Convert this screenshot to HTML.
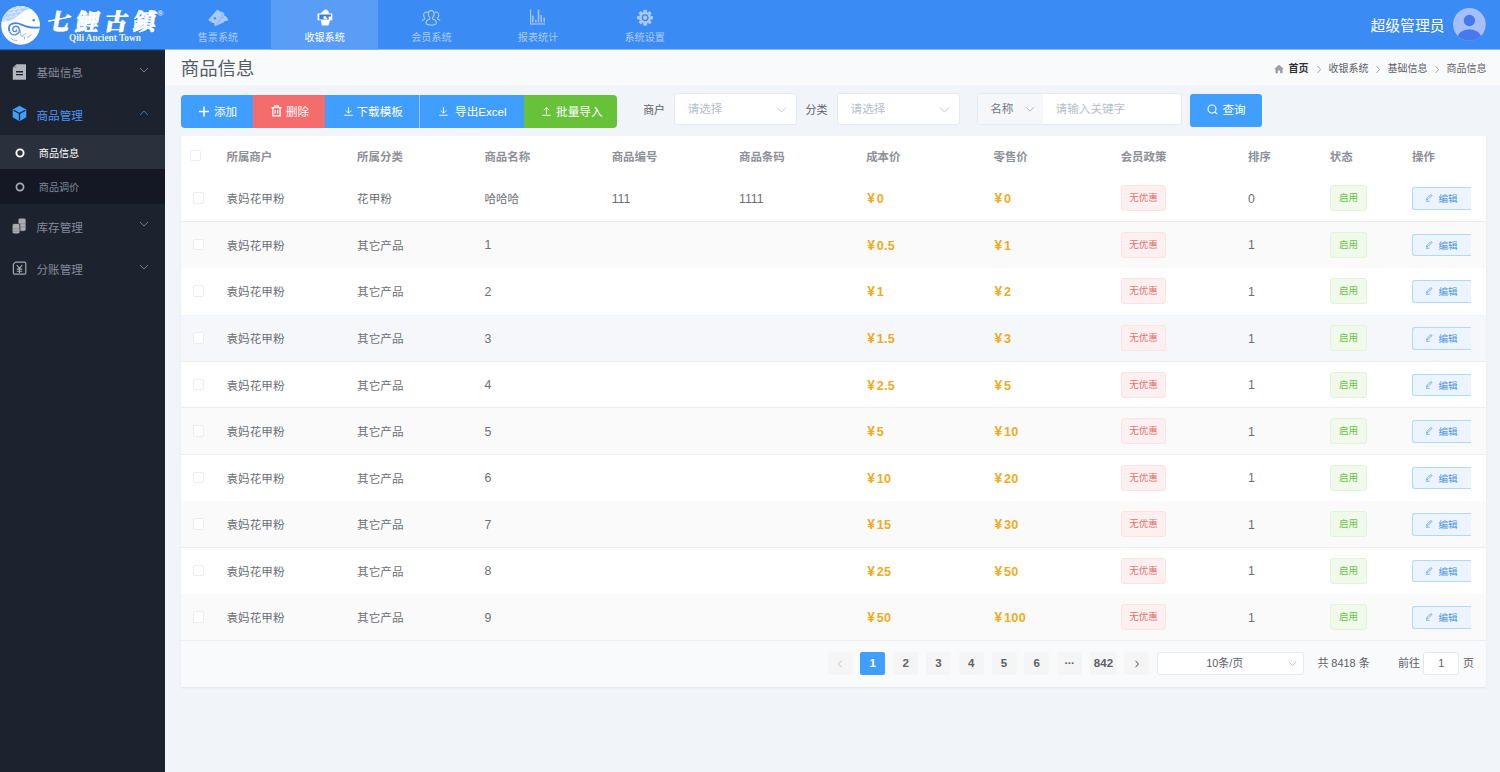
<!DOCTYPE html>
<html lang="zh-CN">
<head>
<meta charset="utf-8">
<title>商品信息 - 七鲤古镇</title>
<style>
*{box-sizing:border-box;margin:0;padding:0}
html,body{width:1500px;height:772px;overflow:hidden}
body{background:#f1f4f8;font-family:"Liberation Sans","Noto Sans CJK SC",sans-serif;font-size:10.94px;color:#606266;position:relative}
ul{list-style:none}
svg{display:block}
/* ---------- header ---------- */
.hd{position:absolute;left:0;top:0;width:1500px;height:49px;background:#3a8bf4;color:#fff;z-index:2;box-shadow:0 1px 0 rgba(58,139,244,.55)}
.logo{position:absolute;left:0;top:0;width:165px;height:50px}
.logo svg{position:absolute;left:0;top:0}
.logo .cn{position:absolute;left:45px;top:8.6px;width:118px;height:28px;line-height:28px;font-family:"Liberation Serif","Noto Serif CJK SC",serif;font-weight:900;font-size:23px;letter-spacing:5.6px;white-space:nowrap;transform:skewX(-10deg);transform-origin:0 100%;color:#fff;-webkit-text-stroke:.7px #fff}
.logo .en{position:absolute;left:69px;top:32.7px;width:74px;line-height:11px;font-family:"Liberation Serif",serif;font-weight:700;font-size:9.3px;white-space:nowrap;color:#eaf2fe}
.logo .r{position:absolute;left:157.6px;top:9.6px;font-size:8px;line-height:8px;font-weight:700;color:#e4effe}
.nav{position:absolute;left:164.6px;top:0;height:49px;display:flex}
.nav li{width:106.7px;height:49px;text-align:center;color:#abccfa;font-size:10.1px;position:relative}
.nav li.on{background:#5a9df6;color:#fff;box-shadow:0 1px 0 rgba(90,157,246,.55)}
.nav li svg{position:absolute;left:50%;top:6.5px;margin-left:-11px;width:22px;height:22px}
.nav li span{position:absolute;left:0;right:0;top:31.2px;line-height:14px}
.user{position:absolute;left:1370.5px;top:0;line-height:52.6px;font-size:14.8px;color:#fff;white-space:nowrap}
.avatar{position:absolute;left:1453.2px;top:8.2px;width:32.8px;height:32.8px}
/* ---------- sidebar ---------- */
.side{position:absolute;left:0;top:49px;padding-top:.6px;width:164.6px;height:723px;background:#1c222e;color:#828a99;box-shadow:inset 0 2px 0 #17305c}
.side .it{position:relative;height:43px;padding-left:36.5px;font-size:11.6px;white-space:nowrap;overflow:hidden}
.side .it svg.ic{position:absolute;left:10px;width:19px;height:19px}
.side .it svg.ar{position:absolute;left:138.5px;width:10px;height:10px}
.side .it.open{color:#4c95f4}
.side .sub{padding-left:38.8px;font-size:10.1px;position:relative;background:#131824;color:#7f8796;white-space:nowrap;overflow:hidden}
.side .sub.on{background:#2b313c;color:#fff}
.side .sub svg{position:absolute;left:15.4px;width:10px;height:10px}
/* ---------- main ---------- */
.tit{position:absolute;left:164.6px;top:49px;padding-top:.6px;width:1336px;height:36px;background:#f8fafc}
.tit h1{position:absolute;left:16.2px;top:.6px;line-height:37.4px;font-size:18.4px;font-weight:400;color:#565c64;white-space:nowrap}
.bc{position:absolute;right:14.2px;top:2.6px;height:35px;line-height:36.5px;font-size:10px;color:#5c6066;white-space:nowrap;display:flex;align-items:center}
.bc b{color:#303133;font-weight:700;margin-right:1px}
.bc svg.h{width:10px;height:10px;margin-right:4.5px}
.bc svg.s{width:6px;height:9px;margin:0 6.2px 0 6.8px}
.tb{position:absolute;left:181px;top:94.8px;height:32.8px}
.btn{position:absolute;top:0;height:32.8px;line-height:32.8px;color:#fff;font-size:11.6px;white-space:nowrap;display:flex;align-items:center;padding-top:1.4px}
.btn svg{flex:none;margin-top:-1.6px}
.b-blue{background:#409eff}.b-red{background:#f56c6c}.b-green{background:#67c23a}
.lab{position:absolute;top:0;line-height:30.6px;font-size:10.94px;color:#5d6167;white-space:nowrap}
.sel{position:absolute;top:-1.5px;height:32px;background:#fff;border:1px solid #e6e9ef;border-radius:3px;line-height:30.6px;padding-left:13px;color:#b9bdc5;font-size:11.6px;white-space:nowrap}
.sel svg{position:absolute;right:9px;top:11.8px;width:11px;height:8px}
.grp{position:absolute;left:795.6px;top:-1.5px;width:205px;height:32px;background:#fff;border:1px solid #e6e9ee;border-radius:3px;overflow:hidden;font-size:11.6px;line-height:30.6px;white-space:nowrap}
.grp .pre{position:absolute;left:0;top:0;width:65.6px;height:30.4px;background:#f5f7fa;color:#73777f;padding-left:12.6px}
.grp .pre svg{position:absolute;left:47px;top:11.5px;width:10px;height:7px}
.grp .ph{position:absolute;left:78px;top:0;color:#babec6}
/* ---------- table ---------- */
.card{position:absolute;left:181px;top:136px;width:1305px;height:551px;background:#fff;box-shadow:0 1px 2px rgba(0,0,0,.07)}
table{border-collapse:separate;border-spacing:0;table-layout:fixed;width:1305px}
th{height:39px;text-align:left;font-size:11.45px;color:#8e9196;font-weight:700;padding:0;white-space:nowrap}
td{height:47px;padding:0;border-bottom:1px solid #fff;font-size:11.6px;color:#6c6f74;white-space:nowrap;overflow:hidden;vertical-align:middle}
tr.r46 td{height:46px}
tr.s td{background:#fafafa;border-bottom-color:#fafafa}
tr.h td{background:#f5f7fa;border-bottom-color:#f5f7fa;box-shadow:inset 0 1px 0 #f2f3f5}
tr.bb td{border-bottom-color:#ececec}
tr.bb.s td{border-bottom-color:#eeeeee}
tr.bb.h td{border-bottom-color:#ececee}
tbody tr:last-child td{border-bottom-color:#ecedf0}
td.n{font-size:12.3px;padding-top:1px}
.ck{display:block;width:11.4px;height:11.4px;border:1px solid #eaedf1;border-radius:2px;background:#fff;margin-left:11.6px}
.pr{color:#efab1f;font-weight:700;font-size:12.7px;letter-spacing:.3px;position:relative;left:1px;top:.5px}
.pr u{text-decoration:none;margin-right:1.5px;font-size:13.8px}
.tag{display:inline-block;vertical-align:middle;height:26px;line-height:24.6px;padding:0 7.6px;border-radius:3px;font-size:9.5px;border:1px solid}
.t-red{background:#fef0f0;border-color:#fde2e2;color:#e07070}
.t-grn{background:#f0f9eb;border-color:#e1f3d8;color:#6cc341;padding:0 8.1px}
.ed{display:block;width:59.1px;height:22.8px;line-height:21.2px;border:1px solid #b3d8ff;border-right:0;background:#ecf5ff;color:#4d94e0;border-radius:3px 0 0 3px;font-size:9.5px;padding-left:25.4px;position:relative;margin-top:1px}
.ed svg{position:absolute;left:11px;top:5.4px;width:9.5px;height:9.5px}
.pg{position:absolute;left:0;top:505px;width:1305px;height:46px;border-top:0 solid #e9ecf2;font-size:10.94px;white-space:nowrap;background:#f9fafc}
.pg .p{position:absolute;top:11.4px;width:25px;height:22.4px;line-height:22.4px;background:#f5f5f6;color:#5d6066;text-align:center;font-weight:700;font-size:11.5px;border-radius:2px}
.pg .p.on{background:#409eff;color:#fff}
.pg .p svg{margin:7.2px auto 0;width:6px;height:8px}
.pg .sz{position:absolute;left:976.4px;top:11px;width:146.6px;height:23.4px;line-height:21.6px;border:1px solid #e6e9ee;border-radius:3px;background:#fff;color:#5d6066;text-align:center;padding-right:12px}
.pg .sz svg{position:absolute;right:6px;top:8px;width:9px;height:6px}
.pg .tt{position:absolute;top:0;line-height:45.4px;color:#5d6066}
.pg .go{position:absolute;left:1242.4px;top:11px;width:36px;height:23.4px;line-height:21.6px;border:1px solid #e4e7ed;border-radius:3px;background:#fff;text-align:center;color:#5d6066}
</style>
</head>
<body>
<div class="hd">
  <div class="logo">
    <svg width="42" height="50" viewBox="0 0 42 50">
      <circle cx="20.6" cy="25.4" r="19.4" fill="#fff"/>
      <path d="M1.9 21.8A19.4 19.4 0 0 1 29.6 8.2Q22.5 11 17.5 16.3 10 22 1.9 21.8z" fill="#b4d2fc"/>
      <path d="M4.5 18.6q2.2-2.6 4.4-.2M9.2 17.6q2.2-2.6 4.4-.2M7.3 14.2q2.2-2.6 4.4-.2M12 13q2.2-2.6 4.4-.2M10.8 10.2q2.2-2.6 4.4-.2M15.6 9.2q2.2-2.6 4.4-.2M17 12.2q2.2-2.6 4.4-.2M20.6 8.4q2.2-2.6 4.4-.2M3 21.2q1.6-2.2 3.6-.2M14 16.6q1.8-2 3.6-.4" fill="none" stroke="#f3f8ff" stroke-width=".9"/>
      <path d="M9.5 31.2Q7.5 26 12 23.8 16.2 22 21.5 24.6 29 28.5 39.7 27.4" fill="none" stroke="#3f86ea" stroke-width="1.8"/>
      <path d="M9.5 31.2Q11 35.6 15.5 34.7 19.7 33.6 19.4 29.5 19 26.2 15.6 26.3 12.6 26.7 12.8 29.7 13.2 32 15.4 31.6 17 31 16.4 29.4" fill="none" stroke="#4a8eee" stroke-width="1.4"/>
      <circle cx="33.7" cy="20.2" r="1.350" fill="#6b93d1"/>
      <path d="M20.3 30Q19.3 34 21.7 36.5 24.2 35 25.6 33M24 36l.5 3.4M10.5 38.2Q13.2 41 17.2 40.4M27 37.5Q30 36.5 31.5 34" fill="none" stroke="#7fb0f6" stroke-width=".9"/>
    </svg>
    <div class="cn">七鯉古鎮</div>
    <div class="en">Qili Ancient Town</div>
    <div class="r">®</div>
  </div>
  <ul class="nav">
    <li>
      <svg viewBox="0 0 22 22"><path fill="#a6cafb" d="M1.2 13.1L10.3 2.6l1.8 1.1 5.3 2.3-.5 1.9 2.8 2.2 1.7 3-2.5 1.2-1.4-.4-.6 1.3-8.7 4-1.1-1.4.3-1.6-1.7-.2z"/><path d="M8.7 17.8L15.3 10" stroke="#4f8fee" stroke-width=".7" stroke-dasharray="1.1 .7" fill="none"/><path d="M13.2 5.4l4 6.3" stroke="#6ba3f4" stroke-width=".6" stroke-dasharray="1 .8" fill="none"/><circle cx="7.9" cy="11.2" r="1.250" fill="#4f8fee"/></svg>
      <span>售票系统</span></li>
    <li class="on">
      <svg viewBox="0 0 22 22"><path fill="#fff" d="M10.8 2.5h1.7l2.2 2.1v1.8h3.6v6.9h-2.1l-1.8 5.1H7.9l-1-5.1H3.6V6.4h2.9z"/><path fill="#3f7fe0" d="M5.3 7.5h11.7v1.9h-2.3v3h-9.4z"/><circle cx="10.9" cy="10.5" r="1.5" fill="#fff"/><path fill="#fff" d="M11.6 11.1h1.7v1.3h-1.7z"/></svg>
      <span>收银系统</span></li>
    <li>
      <svg viewBox="0 0 22 22"><g fill="none" stroke="#b0d0fb" stroke-width="1.1" stroke-linecap="round" stroke-linejoin="round"><path d="M11.2 3.6c-1.9 0-2.9 1.5-2.9 3.4 0 1.8.8 3 1.6 3.8v1.2c-2.2.6-3.8 1.6-3.8 3.4 0 2 2.6 2.6 5.1 2.6s5.1-.6 5.1-2.6c0-1.8-1.6-2.8-3.8-3.4v-1.2c.8-.8 1.6-2 1.6-3.8 0-1.9-1-3.4-2.9-3.4z"/><path d="M7.5 5.2c-2.2-.6-3.9.9-3.9 2.9 0 1.5.6 2.5 1.3 3.1v.9c-1.2.4-2 .8-2.4 1.4"/><path d="M14.9 5.2c2.2-.6 3.9.9 3.9 2.9 0 1.5-.6 2.5-1.3 3.1v.9c1.2.4 2 .8 2.4 1.4"/></g></svg>
      <span>会员系统</span></li>
    <li>
      <svg viewBox="0 0 22 22"><path d="M3.6 2.4v14.6h14.4" fill="none" stroke="#b0d0fb" stroke-width="1.1"/><path d="M5.9 8.6v7M8.8 12.7v2.8M11.5 2.7v12.8M14.2 7.9v7.6M17.2 10.6v4.9" fill="none" stroke="#9fc6fa" stroke-width="1.5"/></svg>
      <span>报表统计</span></li>
    <li>
      <svg viewBox="0 0 22 22"><path fill="#a6cafb" stroke="#a6cafb" stroke-width="1" stroke-linejoin="round" d="M9.80 5.32L9.90 3.25L12.40 3.25L12.50 5.32L14.04 5.95L15.57 4.57L17.33 6.33L15.95 7.86L16.58 9.40L18.65 9.50L18.65 12L16.58 12.10L15.95 13.64L17.33 15.17L15.57 16.93L14.04 15.55L12.50 16.18L12.40 18.25L9.90 18.25L9.80 16.18L8.26 15.55L6.73 16.93L4.97 15.17L6.35 13.64L5.72 12.10L3.65 12L3.65 9.50L5.72 9.40L6.35 7.86L4.97 6.33L6.73 4.57L8.26 5.95z"/><circle cx="11.15" cy="10.75" r="2.8" fill="#a6cafb" stroke="#4284e4" stroke-width="1.3"/></svg>
      <span>系统设置</span></li>
  </ul>
  <div class="user">超级管理员</div>
  <svg class="avatar" viewBox="0 0 33 33"><defs><clipPath id="av"><circle cx="16.5" cy="16.5" r="16.4"/></clipPath></defs><circle cx="16.5" cy="16.5" r="16.4" fill="#a6bffa"/><g clip-path="url(#av)" fill="#4679ec"><circle cx="16.5" cy="12.6" r="5.7"/><ellipse cx="16.5" cy="30" rx="11.8" ry="8.6"/></g></svg>
</div>
<div class="side">
  <div class="it" style="height:43px;line-height:45.6px"><svg class="ic" style="top:12.7px" viewBox="0 0 19 19"><path fill="#b3b6bd" d="M6.4 2.2H16v15.6H2.8V5.8z"/><path fill="#8b8f97" d="M6.4 2.2v3.6H2.8z"/><path d="M6 9.8h7M6 12.6h7" stroke="#1c222e" stroke-width="1.4"/></svg><span>基础信息</span><svg class="ar" style="top:15.2px" viewBox="0 0 10 10"><path d="M1 3l4 4 4-4" fill="none" stroke="#7f8796" stroke-width=".9"/></svg></div>
  <div class="it open" style="height:42.2px;line-height:46.4px"><svg class="ic" style="top:11.7px" viewBox="0 0 19 19"><path fill="#409eff" d="M9.5 1.8l6.8 3.7v7.8l-6.8 3.9-6.8-3.9V5.5z"/><path d="M3.6 6.2l5.9 3.3 5.9-3.3M9.5 9.5v7" fill="none" stroke="#1c222e" stroke-width="1.3"/></svg><span>商品管理</span><svg class="ar" style="top:15px" viewBox="0 0 10 10"><path d="M1 7l4-4 4 4" fill="none" stroke="#3d78c6" stroke-width=".9"/></svg></div>
  <div class="sub on" style="height:34.2px;line-height:37.2px"><svg style="top:13.1px" viewBox="0 0 10 10"><circle cx="5" cy="5" r="3.6" fill="none" stroke="#fff" stroke-width="1.9"/></svg>商品信息</div>
  <div class="sub" style="height:34.7px;line-height:37.6px"><svg style="top:13.3px" viewBox="0 0 10 10"><circle cx="5" cy="5" r="3.6" fill="none" stroke="#a5abb7" stroke-width="1.7"/></svg>商品调价</div>
  <div class="it" style="height:43px;line-height:47.8px"><svg class="ic" style="top:13.1px" viewBox="0 0 19 19"><g fill="#a9acb3" stroke="#1c222e" stroke-width=".8"><path d="M8.1 2.5c0-1.9 7.9-1.9 7.9 0v10.4c0 1.9-7.9 1.9-7.9 0z"/><path d="M8.1 5.6c0 1.5 7.9 1.5 7.9 0M8.1 9c0 1.5 7.9 1.5 7.9 0" fill="none" stroke="#7e828a" stroke-width=".7"/><path d="M2.2 7.8c0-1.8 7.7-1.8 7.7 0v7.8c0 1.9-7.7 1.9-7.7 0z"/><path d="M2.2 10.7c0 1.5 7.7 1.5 7.7 0M2.2 13.2c0 1.5 7.7 1.5 7.7 0" fill="none" stroke="#7e828a" stroke-width=".7"/></g></svg><span>库存管理</span><svg class="ar" style="top:15.3px" viewBox="0 0 10 10"><path d="M1 3l4 4 4-4" fill="none" stroke="#7f8796" stroke-width=".9"/></svg></div>
  <div class="it" style="height:43px;line-height:45.4px"><svg class="ic" style="top:12.4px" viewBox="0 0 19 19"><g fill="none" stroke="#a4a8b0" stroke-width="1.2" stroke-linejoin="round"><path d="M5.4 3.2h9.2q1.2 0 1.2 1.2v9.6q0 1.2-1.2 1.2H4.6q-1.2 0-1.2-1.2V5.2z"/><path d="M6.8 6l2.7 3.4 2.7-3.4M9.5 9.4v4.6M6.8 10.1h5.4M6.8 12.2h5.4" stroke-width="1.150"/></g></svg><span>分账管理</span><svg class="ar" style="top:15.1px" viewBox="0 0 10 10"><path d="M1 3l4 4 4-4" fill="none" stroke="#7f8796" stroke-width=".9"/></svg></div>
</div>
<div class="tit">
  <h1>商品信息</h1>
  <div class="bc"><svg class="h" viewBox="0 0 10 10"><path fill="#9a9da3" d="M5 .8l4.8 4.3H8.5v4.1H6.1V6.4H3.9v2.8H1.5V5.1H.2z"/></svg><b>首页</b><svg class="s" viewBox="0 0 6 9"><path d="M1.5 1l3 3.5-3 3.5" fill="none" stroke="#8e939b" stroke-width=".8"/></svg>收银系统<svg class="s" viewBox="0 0 6 9"><path d="M1.5 1l3 3.5-3 3.5" fill="none" stroke="#8e939b" stroke-width=".8"/></svg>基础信息<svg class="s" viewBox="0 0 6 9"><path d="M1.5 1l3 3.5-3 3.5" fill="none" stroke="#8e939b" stroke-width=".8"/></svg>商品信息</div>
</div>
<div class="tb">
  <div class="btn b-blue" style="left:0;width:72px;border-radius:4px 0 0 4px;padding-left:18px"><svg width="10" height="11" viewBox="0 0 10 11" style="margin-right:5px"><path d="M5 .5v10M0 5.5h10" stroke="#fff" stroke-width="1.5"/></svg>添加</div>
  <div class="btn b-red" style="left:72px;width:72px;padding-left:17.5px"><svg width="11" height="12" viewBox="0 0 11 12" style="margin-right:4.5px"><path d="M.5 2.6h10M3.7 2.4V.9h3.6v1.5M1.9 2.8v8.1h7.2V2.8M4.3 5v3.6M6.7 5v3.6" fill="none" stroke="#fff" stroke-width="1.3"/></svg>删除</div>
  <div class="btn b-blue" style="left:144px;width:94.4px;padding-left:18.5px"><svg width="9" height="9" viewBox="0 0 9 9" style="margin-right:4px"><path d="M4.5 0v6M1.8 3.5l2.7 2.7 2.7-2.7M.2 8.3h8.6" fill="none" stroke="#fff" stroke-width=".9"/></svg>下载模板</div>
  <div class="btn b-blue" style="left:238.4px;width:104.2px;padding-left:18.5px;border-left:1px solid #a0cfff"><svg width="9" height="9" viewBox="0 0 9 9" style="margin-right:7.2px"><path d="M4.5 0v6M1.8 3.5l2.7 2.7 2.7-2.7M.2 8.3h8.6" fill="none" stroke="#fff" stroke-width=".9"/></svg>导出Excel</div>
  <div class="btn b-green" style="left:342.6px;width:93.6px;border-radius:0 4px 4px 0;padding-left:18.5px"><svg width="9" height="9" viewBox="0 0 9 9" style="margin-right:5px"><path d="M4.5 7V.8M1.8 3.3L4.5.6l2.7 2.7M.2 8.3h8.6" fill="none" stroke="#fff" stroke-width=".9"/></svg>批量导入</div>
  <div class="lab" style="left:462.2px">商户</div>
  <div class="sel" style="left:492.6px;width:123.4px">请选择<svg viewBox="0 0 11 8"><path d="M1 1.5l4.5 4.5L10 1.5" fill="none" stroke="#c0c4cc" stroke-width="1"/></svg></div>
  <div class="lab" style="left:624.6px">分类</div>
  <div class="sel" style="left:655.6px;width:123.4px">请选择<svg viewBox="0 0 11 8"><path d="M1 1.5l4.5 4.5L10 1.5" fill="none" stroke="#c0c4cc" stroke-width="1"/></svg></div>
  <div class="grp"><div class="pre">名称<svg viewBox="0 0 10 7"><path d="M1 1.2l4 4 4-4" fill="none" stroke="#b0b4bc" stroke-width="1"/></svg></div><div class="ph">请输入关键字</div></div>
  <div class="btn b-blue" style="left:1009px;top:-.6px;width:72px;border-radius:3px;padding-left:17px;padding-top:0"><svg width="11" height="11" viewBox="0 0 11 11" style="margin-right:4.5px"><circle cx="5" cy="5" r="4" fill="none" stroke="#fff" stroke-width="1.1"/><path d="M7.9 7.9l2.3 2.3" stroke="#fff" stroke-width="1.1"/></svg>查询</div>
</div>
<div class="card">
<table>
<colgroup><col style="width:45.5px"><col style="width:130.6px"><col style="width:127.3px"><col style="width:127.3px"><col style="width:127.3px"><col style="width:127.2px"><col style="width:127.3px"><col style="width:127.2px"><col style="width:127.3px"><col style="width:81.9px"><col style="width:82.2px"><col style="width:59.1px"><col></colgroup>
<thead><tr><th><i class="ck" style="margin-left:8.7px"></i></th><th>所属商户</th><th>所属分类</th><th>商品名称</th><th>商品编号</th><th>商品条码</th><th>成本价</th><th>零售价</th><th>会员政策</th><th>排序</th><th>状态</th><th>操作</th><th></th></tr></thead>
<tbody>
<tr class="r47 bb"><td><i class="ck"></i></td><td>袁妈花甲粉</td><td>花甲粉</td><td>哈哈哈</td><td class="n">111</td><td class="n">1111</td><td><b class="pr"><u>¥</u>0</b></td><td><b class="pr"><u>¥</u>0</b></td><td><span class="tag t-red">无优惠</span></td><td class="n">0</td><td><span class="tag t-grn">启用</span></td><td><span class="ed"><svg viewBox="0 0 12 12"><path d="M3.2 8.8 L3.6 6.9 L8.2 2.3 Q8.8 1.7 9.5 2.4 Q10.2 3.1 9.6 3.7 L5 8.3 Z M2.4 10.4 H7" fill="none" stroke="#5a9ae0" stroke-width="1"/></svg>编辑</span></td><td></td></tr>
<tr class="s r46"><td><i class="ck"></i></td><td>袁妈花甲粉</td><td>其它产品</td><td class="n">1</td><td class="n"></td><td class="n"></td><td><b class="pr"><u>¥</u>0.5</b></td><td><b class="pr"><u>¥</u>1</b></td><td><span class="tag t-red">无优惠</span></td><td class="n">1</td><td><span class="tag t-grn">启用</span></td><td><span class="ed"><svg viewBox="0 0 12 12"><path d="M3.2 8.8 L3.6 6.9 L8.2 2.3 Q8.8 1.7 9.5 2.4 Q10.2 3.1 9.6 3.7 L5 8.3 Z M2.4 10.4 H7" fill="none" stroke="#5a9ae0" stroke-width="1"/></svg>编辑</span></td><td></td></tr>
<tr class="r47"><td><i class="ck"></i></td><td>袁妈花甲粉</td><td>其它产品</td><td class="n">2</td><td class="n"></td><td class="n"></td><td><b class="pr"><u>¥</u>1</b></td><td><b class="pr"><u>¥</u>2</b></td><td><span class="tag t-red">无优惠</span></td><td class="n">1</td><td><span class="tag t-grn">启用</span></td><td><span class="ed"><svg viewBox="0 0 12 12"><path d="M3.2 8.8 L3.6 6.9 L8.2 2.3 Q8.8 1.7 9.5 2.4 Q10.2 3.1 9.6 3.7 L5 8.3 Z M2.4 10.4 H7" fill="none" stroke="#5a9ae0" stroke-width="1"/></svg>编辑</span></td><td></td></tr>
<tr class="h r47 bb"><td><i class="ck"></i></td><td>袁妈花甲粉</td><td>其它产品</td><td class="n">3</td><td class="n"></td><td class="n"></td><td><b class="pr"><u>¥</u>1.5</b></td><td><b class="pr"><u>¥</u>3</b></td><td><span class="tag t-red">无优惠</span></td><td class="n">1</td><td><span class="tag t-grn">启用</span></td><td><span class="ed"><svg viewBox="0 0 12 12"><path d="M3.2 8.8 L3.6 6.9 L8.2 2.3 Q8.8 1.7 9.5 2.4 Q10.2 3.1 9.6 3.7 L5 8.3 Z M2.4 10.4 H7" fill="none" stroke="#5a9ae0" stroke-width="1"/></svg>编辑</span></td><td></td></tr>
<tr class="r46 bb"><td><i class="ck"></i></td><td>袁妈花甲粉</td><td>其它产品</td><td class="n">4</td><td class="n"></td><td class="n"></td><td><b class="pr"><u>¥</u>2.5</b></td><td><b class="pr"><u>¥</u>5</b></td><td><span class="tag t-red">无优惠</span></td><td class="n">1</td><td><span class="tag t-grn">启用</span></td><td><span class="ed"><svg viewBox="0 0 12 12"><path d="M3.2 8.8 L3.6 6.9 L8.2 2.3 Q8.8 1.7 9.5 2.4 Q10.2 3.1 9.6 3.7 L5 8.3 Z M2.4 10.4 H7" fill="none" stroke="#5a9ae0" stroke-width="1"/></svg>编辑</span></td><td></td></tr>
<tr class="s r47 bb"><td><i class="ck"></i></td><td>袁妈花甲粉</td><td>其它产品</td><td class="n">5</td><td class="n"></td><td class="n"></td><td><b class="pr"><u>¥</u>5</b></td><td><b class="pr"><u>¥</u>10</b></td><td><span class="tag t-red">无优惠</span></td><td class="n">1</td><td><span class="tag t-grn">启用</span></td><td><span class="ed"><svg viewBox="0 0 12 12"><path d="M3.2 8.8 L3.6 6.9 L8.2 2.3 Q8.8 1.7 9.5 2.4 Q10.2 3.1 9.6 3.7 L5 8.3 Z M2.4 10.4 H7" fill="none" stroke="#5a9ae0" stroke-width="1"/></svg>编辑</span></td><td></td></tr>
<tr class="r46"><td><i class="ck"></i></td><td>袁妈花甲粉</td><td>其它产品</td><td class="n">6</td><td class="n"></td><td class="n"></td><td><b class="pr"><u>¥</u>10</b></td><td><b class="pr"><u>¥</u>20</b></td><td><span class="tag t-red">无优惠</span></td><td class="n">1</td><td><span class="tag t-grn">启用</span></td><td><span class="ed"><svg viewBox="0 0 12 12"><path d="M3.2 8.8 L3.6 6.9 L8.2 2.3 Q8.8 1.7 9.5 2.4 Q10.2 3.1 9.6 3.7 L5 8.3 Z M2.4 10.4 H7" fill="none" stroke="#5a9ae0" stroke-width="1"/></svg>编辑</span></td><td></td></tr>
<tr class="s r47 bb"><td><i class="ck"></i></td><td>袁妈花甲粉</td><td>其它产品</td><td class="n">7</td><td class="n"></td><td class="n"></td><td><b class="pr"><u>¥</u>15</b></td><td><b class="pr"><u>¥</u>30</b></td><td><span class="tag t-red">无优惠</span></td><td class="n">1</td><td><span class="tag t-grn">启用</span></td><td><span class="ed"><svg viewBox="0 0 12 12"><path d="M3.2 8.8 L3.6 6.9 L8.2 2.3 Q8.8 1.7 9.5 2.4 Q10.2 3.1 9.6 3.7 L5 8.3 Z M2.4 10.4 H7" fill="none" stroke="#5a9ae0" stroke-width="1"/></svg>编辑</span></td><td></td></tr>
<tr class="r46"><td><i class="ck"></i></td><td>袁妈花甲粉</td><td>其它产品</td><td class="n">8</td><td class="n"></td><td class="n"></td><td><b class="pr"><u>¥</u>25</b></td><td><b class="pr"><u>¥</u>50</b></td><td><span class="tag t-red">无优惠</span></td><td class="n">1</td><td><span class="tag t-grn">启用</span></td><td><span class="ed"><svg viewBox="0 0 12 12"><path d="M3.2 8.8 L3.6 6.9 L8.2 2.3 Q8.8 1.7 9.5 2.4 Q10.2 3.1 9.6 3.7 L5 8.3 Z M2.4 10.4 H7" fill="none" stroke="#5a9ae0" stroke-width="1"/></svg>编辑</span></td><td></td></tr>
<tr class="s r47 bb"><td><i class="ck"></i></td><td>袁妈花甲粉</td><td>其它产品</td><td class="n">9</td><td class="n"></td><td class="n"></td><td><b class="pr"><u>¥</u>50</b></td><td><b class="pr"><u>¥</u>100</b></td><td><span class="tag t-red">无优惠</span></td><td class="n">1</td><td><span class="tag t-grn">启用</span></td><td><span class="ed"><svg viewBox="0 0 12 12"><path d="M3.2 8.8 L3.6 6.9 L8.2 2.3 Q8.8 1.7 9.5 2.4 Q10.2 3.1 9.6 3.7 L5 8.3 Z M2.4 10.4 H7" fill="none" stroke="#5a9ae0" stroke-width="1"/></svg>编辑</span></td><td></td></tr>
</tbody>
</table>
<div class="pg">
  <span class="p" style="left:646.5px"><svg viewBox="0 0 6 8"><path d="M4.5 .8L1.5 4l3 3.2" fill="none" stroke="#c0c4cc" stroke-width="1"/></svg></span>
  <span class="p on" style="left:679.3px">1</span>
  <span class="p" style="left:712.1px">2</span>
  <span class="p" style="left:744.9px">3</span>
  <span class="p" style="left:777.7px">4</span>
  <span class="p" style="left:810.5px">5</span>
  <span class="p" style="left:843.3px">6</span>
  <span class="p" style="left:876.1px;letter-spacing:-.6px;line-height:23.8px;text-indent:-.6px">···</span>
  <span class="p" style="left:909.2px;width:26.5px">842</span>
  <span class="p" style="left:943.2px"><svg viewBox="0 0 6 8"><path d="M1.5 .8L4.5 4l-3 3.2" fill="none" stroke="#4a4d52" stroke-width="1"/></svg></span>
  <div class="sz">10条/页<svg viewBox="0 0 9 6"><path d="M1 1l3.5 3.5L8 1" fill="none" stroke="#c0c4cc" stroke-width="1"/></svg></div>
  <span class="tt" style="left:1136.4px">共 8418 条</span>
  <span class="tt" style="left:1217px">前往</span>
  <div class="go">1</div>
  <span class="tt" style="left:1282px">页</span>
</div>
</div>
</body>
</html>
